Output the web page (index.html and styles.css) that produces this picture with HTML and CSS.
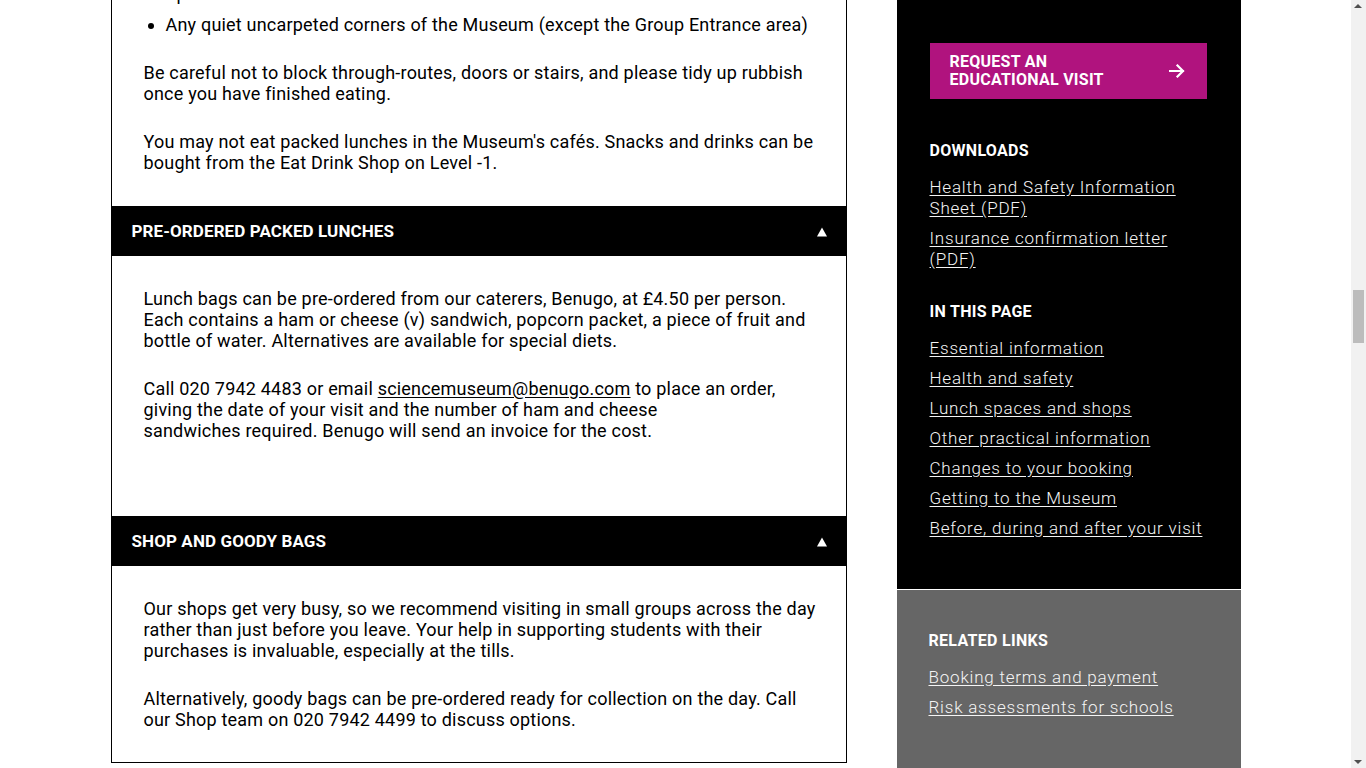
FILE: index.html
```html
<!DOCTYPE html>
<html lang="en">
<head>
<meta charset="utf-8">
<title>Lunch spaces and shops – School visits</title>
<link rel="stylesheet" href="styles.css">
</head>
<body>
<div class="page">
  <main class="accordion">
    <section class="panel">
      <div class="panel-body panel-body--first">
        <ul class="bullets">
          <li>Space in the Garden on Level -1 when it is not booked</li>
          <li>Any quiet uncarpeted corners of the Museum (except the Group Entrance area)</li>
        </ul>
        <p>Be careful not to block through-routes, doors or stairs, and please tidy up rubbish once you have finished eating.</p>
        <p>You may not eat packed lunches in the Museum's cafés. Snacks and drinks can be bought from the Eat Drink Shop on Level -1.</p>
      </div>
    </section>
    <section class="panel">
      <button class="panel-head" type="button">
        <span>Pre-ordered packed lunches</span>
        <svg class="caret" width="10" height="10" viewBox="0 0 10 10" aria-hidden="true"><polygon points="5,0.5 10,9.5 0,9.5" fill="#fff"/></svg>
      </button>
      <div class="panel-body panel-body--tall">
        <p>Lunch bags can be pre-ordered from our caterers, Benugo, at £4.50 per person. Each contains a ham or cheese (v) sandwich, popcorn packet, a piece of fruit and bottle of water. Alternatives are available for special diets.</p>
        <p>Call 020 7942 4483 or email <a href="#">sciencemuseum@benugo.com</a> to place an order, giving the date of your visit and the number of ham and cheese<br>sandwiches required. Benugo will send an invoice for the cost.</p>
      </div>
    </section>
    <section class="panel">
      <button class="panel-head" type="button">
        <span>Shop and goody bags</span>
        <svg class="caret" width="10" height="10" viewBox="0 0 10 10" aria-hidden="true"><polygon points="5,0.5 10,9.5 0,9.5" fill="#fff"/></svg>
      </button>
      <div class="panel-body">
        <p>Our shops get very busy, so we recommend visiting in small groups across the day rather than just before you leave. Your help in supporting students with their purchases is invaluable, especially at the tills.</p>
        <p>Alternatively, goody bags can be pre-ordered ready for collection on the day. Call our Shop team on 020 7942 4499 to discuss options.</p>
      </div>
    </section>
  </main>

  <aside class="sidebar">
    <div class="side-dark">
      <a class="cta" href="#">
        <span class="cta-text">Request an<br>educational visit</span>
        <svg class="cta-arrow" width="16" height="14" viewBox="0 0 16 14" aria-hidden="true"><path d="M1 7h13M8.5 1.5L14 7l-5.5 5.5" fill="none" stroke="#fff" stroke-width="2.2" stroke-linecap="square"/></svg>
      </a>
      <h3 class="side-title side-title--first">Downloads</h3>
      <ul class="side-links">
        <li><a href="#">Health and Safety Information Sheet (PDF)</a></li>
        <li><a href="#">Insurance confirmation letter (PDF)</a></li>
      </ul>
      <h3 class="side-title">In this page</h3>
      <ul class="side-links">
        <li><a href="#">Essential information</a></li>
        <li><a href="#">Health and safety</a></li>
        <li><a href="#">Lunch spaces and shops</a></li>
        <li><a href="#">Other practical information</a></li>
        <li><a href="#">Changes to your booking</a></li>
        <li><a href="#">Getting to the Museum</a></li>
        <li><a href="#">Before, during and after your visit</a></li>
      </ul>
    </div>
    <div class="side-grey">
      <h3 class="side-title side-title--first">Related links</h3>
      <ul class="side-links">
        <li><a href="#">Booking terms and payment</a></li>
        <li><a href="#">Risk assessments for schools</a></li>
      </ul>
    </div>
  </aside>
</div>

<div class="scrollbar" aria-hidden="true">
  <span class="scroll-btn scroll-btn--up"></span>
  <span class="scroll-thumb"></span>
  <span class="scroll-btn scroll-btn--down"></span>
</div>
</body>
</html>
```
FILE: styles.css
```css
* { box-sizing: border-box; }

html, body {
  margin: 0;
  padding: 0;
  background: #fff;
}

body {
  font-family: Roboto, "Liberation Sans", Arial, sans-serif;
  color: #000;
  margin-right: 15px;
}

.page {
  width: 1130px;
  margin: -49px auto 0;
  display: flex;
  align-items: flex-start;
  gap: 50px;
  padding-bottom: 160px;
}

/* ---------- accordion ---------- */
.accordion {
  width: 736px;
  flex: none;
  border: 1px solid #000;
  border-top: none;
}

.panel-head {
  display: flex;
  align-items: center;
  justify-content: space-between;
  width: calc(100% + 2px);
  height: 50px;
  margin: 0 -1px;
  padding: 0 20px 0 21px;
  background: #000;
  color: #fff;
  border: 0;
  font-family: Roboto, "Liberation Sans", Arial, sans-serif;
  font-weight: 700;
  font-size: 17px;
  letter-spacing: 0.1px;
  text-transform: uppercase;
  text-align: left;
  cursor: pointer;
}

.caret { display: block; margin-top: 1px; }

.panel-body {
  padding: 32px 26px 32px 32px;
  font-size: 18px;
  line-height: 21px;
  letter-spacing: 0.2px;
}

.panel-body--first { padding-bottom: 33px; }
.panel-body--tall { padding-bottom: 75px; }

.panel-body p {
  margin: 0 0 27px;
}
.panel-body p:last-child { margin-bottom: 0; }

.panel-body a {
  color: #000;
  text-decoration: underline;
  text-underline-offset: 2px;
}

.bullets {
  margin: 0 0 27px;
  padding: 0 0 0 22px;
}
.bullets li {
  margin-bottom: 10px;
}
.bullets li:last-child { margin-bottom: 0; }

/* ---------- sidebar ---------- */
.sidebar {
  width: 344px;
  flex: none;
  color: #fff;
}

.side-dark {
  background: #000;
  padding: 92px 34px 50px 33px;
}

.side-grey {
  background: #666;
  border-top: 1px solid #fff;
  padding: 41px 34px 200px 32px;
}

.cta {
  display: flex;
  align-items: center;
  justify-content: space-between;
  height: 56px;
  padding: 0 22px 0 20px;
  background: #b0137e;
  color: #fff;
  text-decoration: none;
  font-weight: 700;
  font-size: 16px;
  line-height: 18px;
  letter-spacing: 0.25px;
  text-transform: uppercase;
}

.side-title {
  margin: 32px 0 0;
  font-size: 16px;
  line-height: 20px;
  font-weight: 700;
  letter-spacing: 0.3px;
  text-transform: uppercase;
}
.side-title--first { margin-top: 42px; }
.side-grey .side-title--first { margin-top: 0; }

.side-links {
  list-style: none;
  margin: 16px 0 0;
  padding: 0;
}
.side-links li { margin-top: 9px; }
.side-links li:first-child { margin-top: 0; }

.side-links a {
  color: #f5f5f5;
  font-size: 17px;
  line-height: 21px;
  font-weight: 300;
  letter-spacing: 0.8px;
  text-decoration: underline;
  text-underline-offset: 2px;
}

/* ---------- browser scrollbar (as in the capture) ---------- */
.scrollbar {
  position: fixed;
  top: 0;
  right: 0;
  width: 15px;
  height: 100vh;
  background: #f1f1f1;
}

.scroll-thumb {
  position: absolute;
  left: 2px;
  right: 2px;
  top: 290px;
  height: 53px;
  background: #bcbcbc;
}

.scroll-btn {
  position: absolute;
  left: 3px;
  width: 0;
  height: 0;
  border-left: 4.5px solid transparent;
  border-right: 4.5px solid transparent;
}
.scroll-btn--up {
  top: 4px;
  border-bottom: 4px solid #505050;
}
.scroll-btn--down {
  bottom: 4px;
  border-top: 4px solid #505050;
}
```
